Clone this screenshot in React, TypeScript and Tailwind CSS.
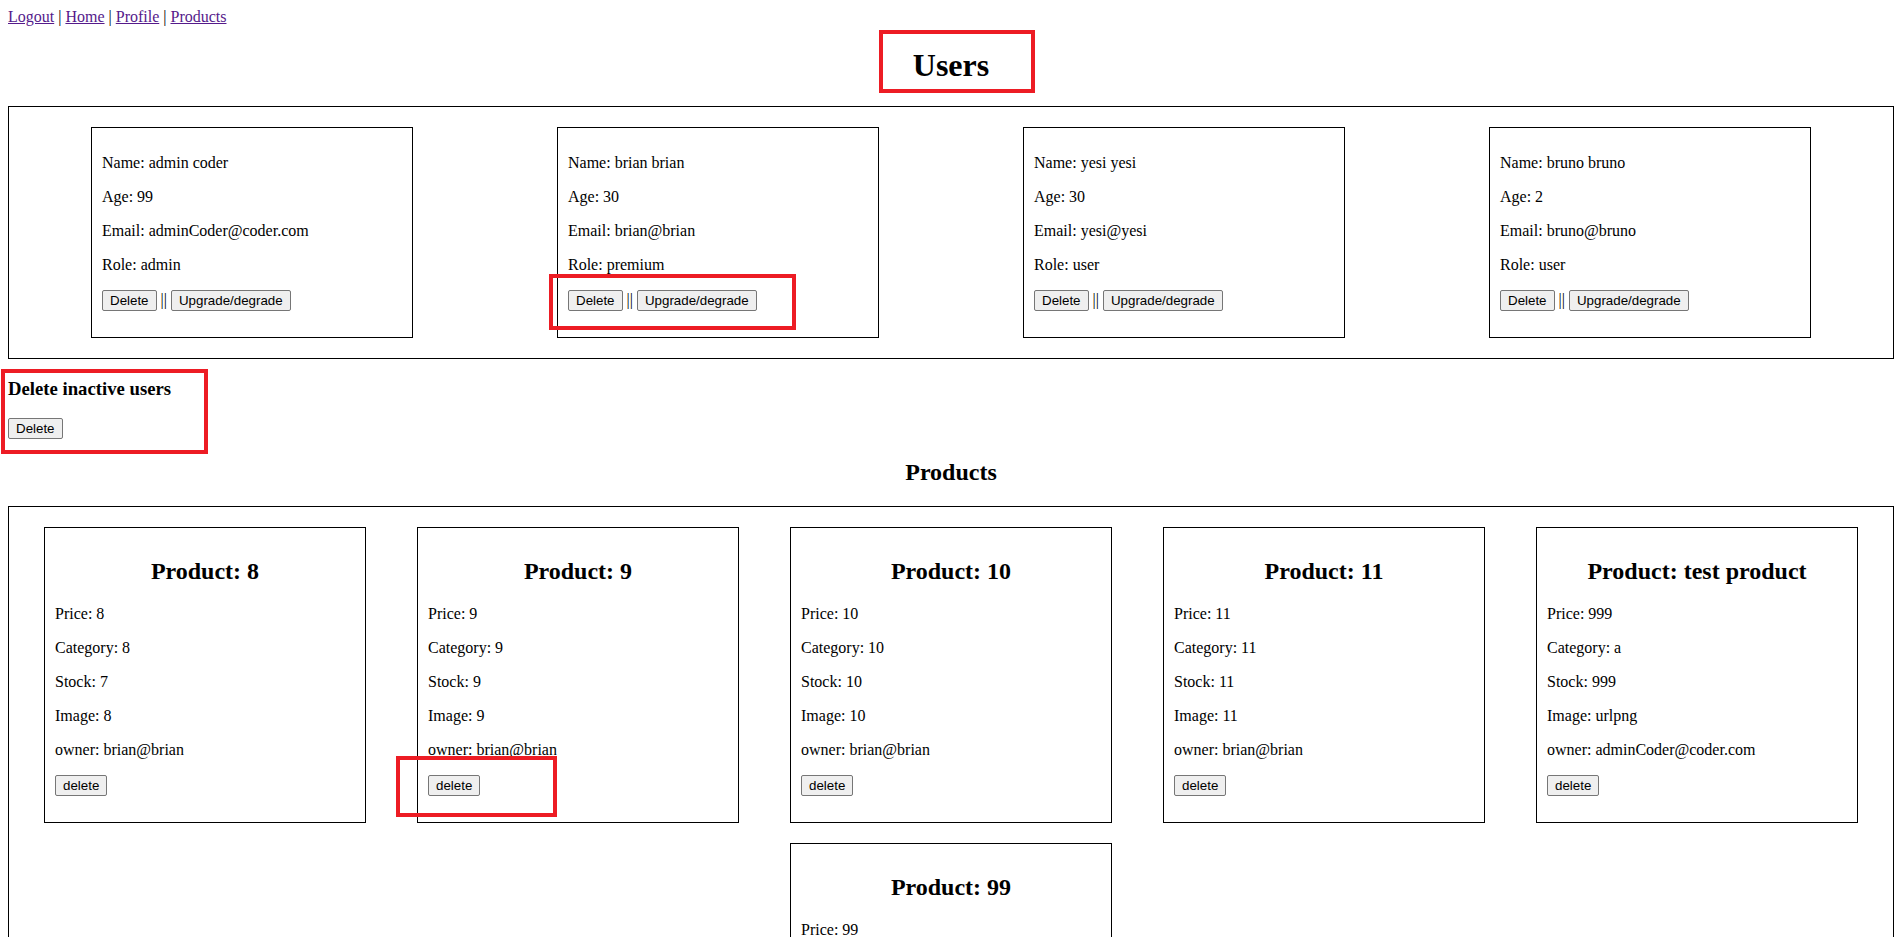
import React from 'react';

interface User {
  name: string;
  age: number;
  email: string;
  role: string;
}

interface Product {
  title: string;
  price: string;
  category: string;
  stock: string;
  image: string;
  owner: string;
}

const users: User[] = [
  { name: 'admin coder', age: 99, email: 'adminCoder@coder.com', role: 'admin' },
  { name: 'brian brian', age: 30, email: 'brian@brian', role: 'premium' },
  { name: 'yesi yesi', age: 30, email: 'yesi@yesi', role: 'user' },
  { name: 'bruno bruno', age: 2, email: 'bruno@bruno', role: 'user' },
];

const products: Product[] = [
  { title: '8', price: '8', category: '8', stock: '7', image: '8', owner: 'brian@brian' },
  { title: '9', price: '9', category: '9', stock: '9', image: '9', owner: 'brian@brian' },
  { title: '10', price: '10', category: '10', stock: '10', image: '10', owner: 'brian@brian' },
  { title: '11', price: '11', category: '11', stock: '11', image: '11', owner: 'brian@brian' },
  { title: 'test product', price: '999', category: 'a', stock: '999', image: 'urlpng', owner: 'adminCoder@coder.com' },
  { title: '99', price: '99', category: '99', stock: '99', image: '99', owner: 'brian@brian' },
];

// native-looking button, since preflight strips the browser default
const Btn: React.FC<{ children: React.ReactNode }> = ({ children }) => (
  <button className="bg-[#efefef] border border-[#767676] rounded-[2px] px-[7px] py-[2px] font-['Liberation_Sans'] text-[13.333px] leading-[normal] text-black">
    {children}
  </button>
);

const UserCard: React.FC<{ user: User }> = ({ user }) => (
  <div className="w-[322px] border border-black p-[10px]">
    <p className="my-4">Name: {user.name}</p>
    <p className="my-4">Age: {user.age}</p>
    <p className="my-4">Email: {user.email}</p>
    <p className="my-4">Role: {user.role}</p>
    <p className="my-4">
      <Btn>Delete</Btn> || <Btn>Upgrade/degrade</Btn>
    </p>
  </div>
);

const ProductCard: React.FC<{ product: Product }> = ({ product }) => (
  <div className="w-[322px] border border-black p-[10px]">
    <h2 className="my-[19.92px] text-center text-[24px] font-bold">Product: {product.title}</h2>
    <p className="my-4">Price: {product.price}</p>
    <p className="my-4">Category: {product.category}</p>
    <p className="my-4">Stock: {product.stock}</p>
    <p className="my-4">Image: {product.image}</p>
    <p className="my-4">owner: {product.owner}</p>
    <p className="my-4">
      <Btn>delete</Btn>
    </p>
  </div>
);

export default function App() {
  return (
    <div className="relative h-[937px] overflow-hidden bg-white pt-2 font-['Liberation_Serif',serif] text-[16px] leading-[normal] text-black">
      <div className="ml-2 w-[1886px]">
        {/* Nav */}
        <div>
          <a href="#" className="text-[#551a8b] underline">Logout</a> |{' '}
          <a href="#" className="text-[#551a8b] underline">Home</a> |{' '}
          <a href="#" className="text-[#551a8b] underline">Profile</a> |{' '}
          <a href="#" className="text-[#551a8b] underline">Products</a>
        </div>

        <h1 className="my-[21.44px] text-center text-[32px] font-bold">Users</h1>

        {/* Users */}
        <div className="flex flex-wrap justify-center gap-x-[144px] border border-black py-5">
          {users.map((u) => (
            <UserCard key={u.email} user={u} />
          ))}
        </div>

        <h3 className="my-[18.72px] text-[18.72px] font-bold">Delete inactive users</h3>
        <div>
          <Btn>Delete</Btn>
        </div>

        <h2 className="my-[19.92px] text-center text-[24px] font-bold">Products</h2>

        {/* Products */}
        <div className="flex flex-wrap justify-center gap-x-[51px] gap-y-5 border border-black py-5">
          {products.map((p) => (
            <ProductCard key={p.title} product={p} />
          ))}
        </div>
      </div>

      {/* red annotation boxes */}
      <div className="absolute left-[879px] top-[30px] h-[63px] w-[156px] border-4 border-[#ed1c24]" />
      <div className="absolute left-[549px] top-[274px] h-[56px] w-[247px] border-4 border-[#ed1c24]" />
      <div className="absolute left-[1px] top-[369px] h-[85px] w-[207px] border-4 border-[#ed1c24]" />
      <div className="absolute left-[396px] top-[756px] h-[61px] w-[161px] border-4 border-[#ed1c24]" />
    </div>
  );
}
